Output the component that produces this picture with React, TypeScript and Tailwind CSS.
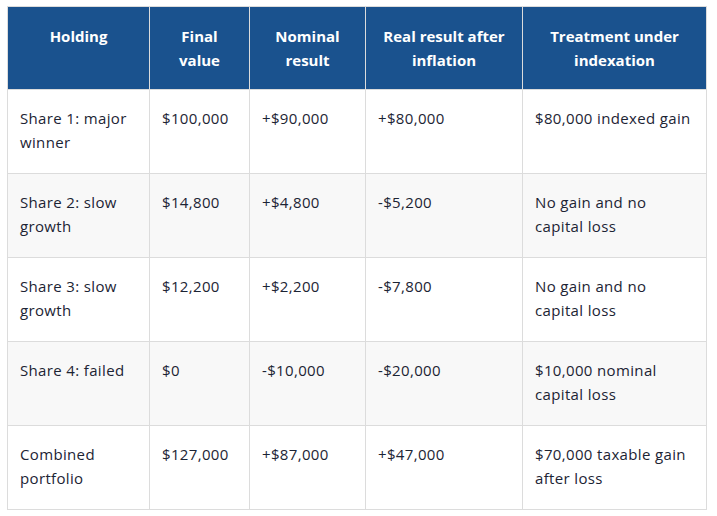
const rows = [
  ["Share 1: major winner", "$100,000", "+$90,000", "+$80,000", "$80,000 indexed gain"],
  ["Share 2: slow growth", "$14,800", "+$4,800", "-$5,200", "No gain and no capital loss"],
  ["Share 3: slow growth", "$12,200", "+$2,200", "-$7,800", "No gain and no capital loss"],
  ["Share 4: failed", "$0", "-$10,000", "-$20,000", "$10,000 nominal capital loss"],
  ["Combined portfolio", "$127,000", "+$87,000", "+$47,000", "$70,000 taxable gain after loss"],
];

const headers = ["Holding", "Final value", "Nominal result", "Real result after inflation", "Treatment under indexation"];

export default function App() {
  return (
    <div className="min-h-[516px] bg-white pl-[7px] pt-[6px] font-['Open_Sans',sans-serif] text-[15px] leading-6 tracking-[0.35px] text-[#1c2434]">
      <table className="w-[699px] table-fixed border-collapse">
        <colgroup>
          <col className="w-[142px]" />
          <col className="w-[100px]" />
          <col className="w-[116px]" />
          <col className="w-[157px]" />
          <col className="w-[184px]" />
        </colgroup>
        <thead>
          <tr className="h-[83px] bg-[#1a528e]">
            {headers.map((h) => (
              <th key={h} className="border border-[#dcdcdc] px-3 pt-[17px] pb-[17px] text-center align-top font-bold tracking-normal text-white">
                {h}
              </th>
            ))}
          </tr>
        </thead>
        <tbody>
          {rows.map((r, i) => (
            <tr key={r[0]} className={`h-[84px] ${i % 2 === 1 ? "bg-[#f8f8f8]" : "bg-white"}`}>
              {r.map((c, j) => (
                <td key={j} className="border border-[#dcdcdc] px-3 pt-[16px] pb-[18px] align-top">
                  {c}
                </td>
              ))}
            </tr>
          ))}
        </tbody>
      </table>
    </div>
  );
}
